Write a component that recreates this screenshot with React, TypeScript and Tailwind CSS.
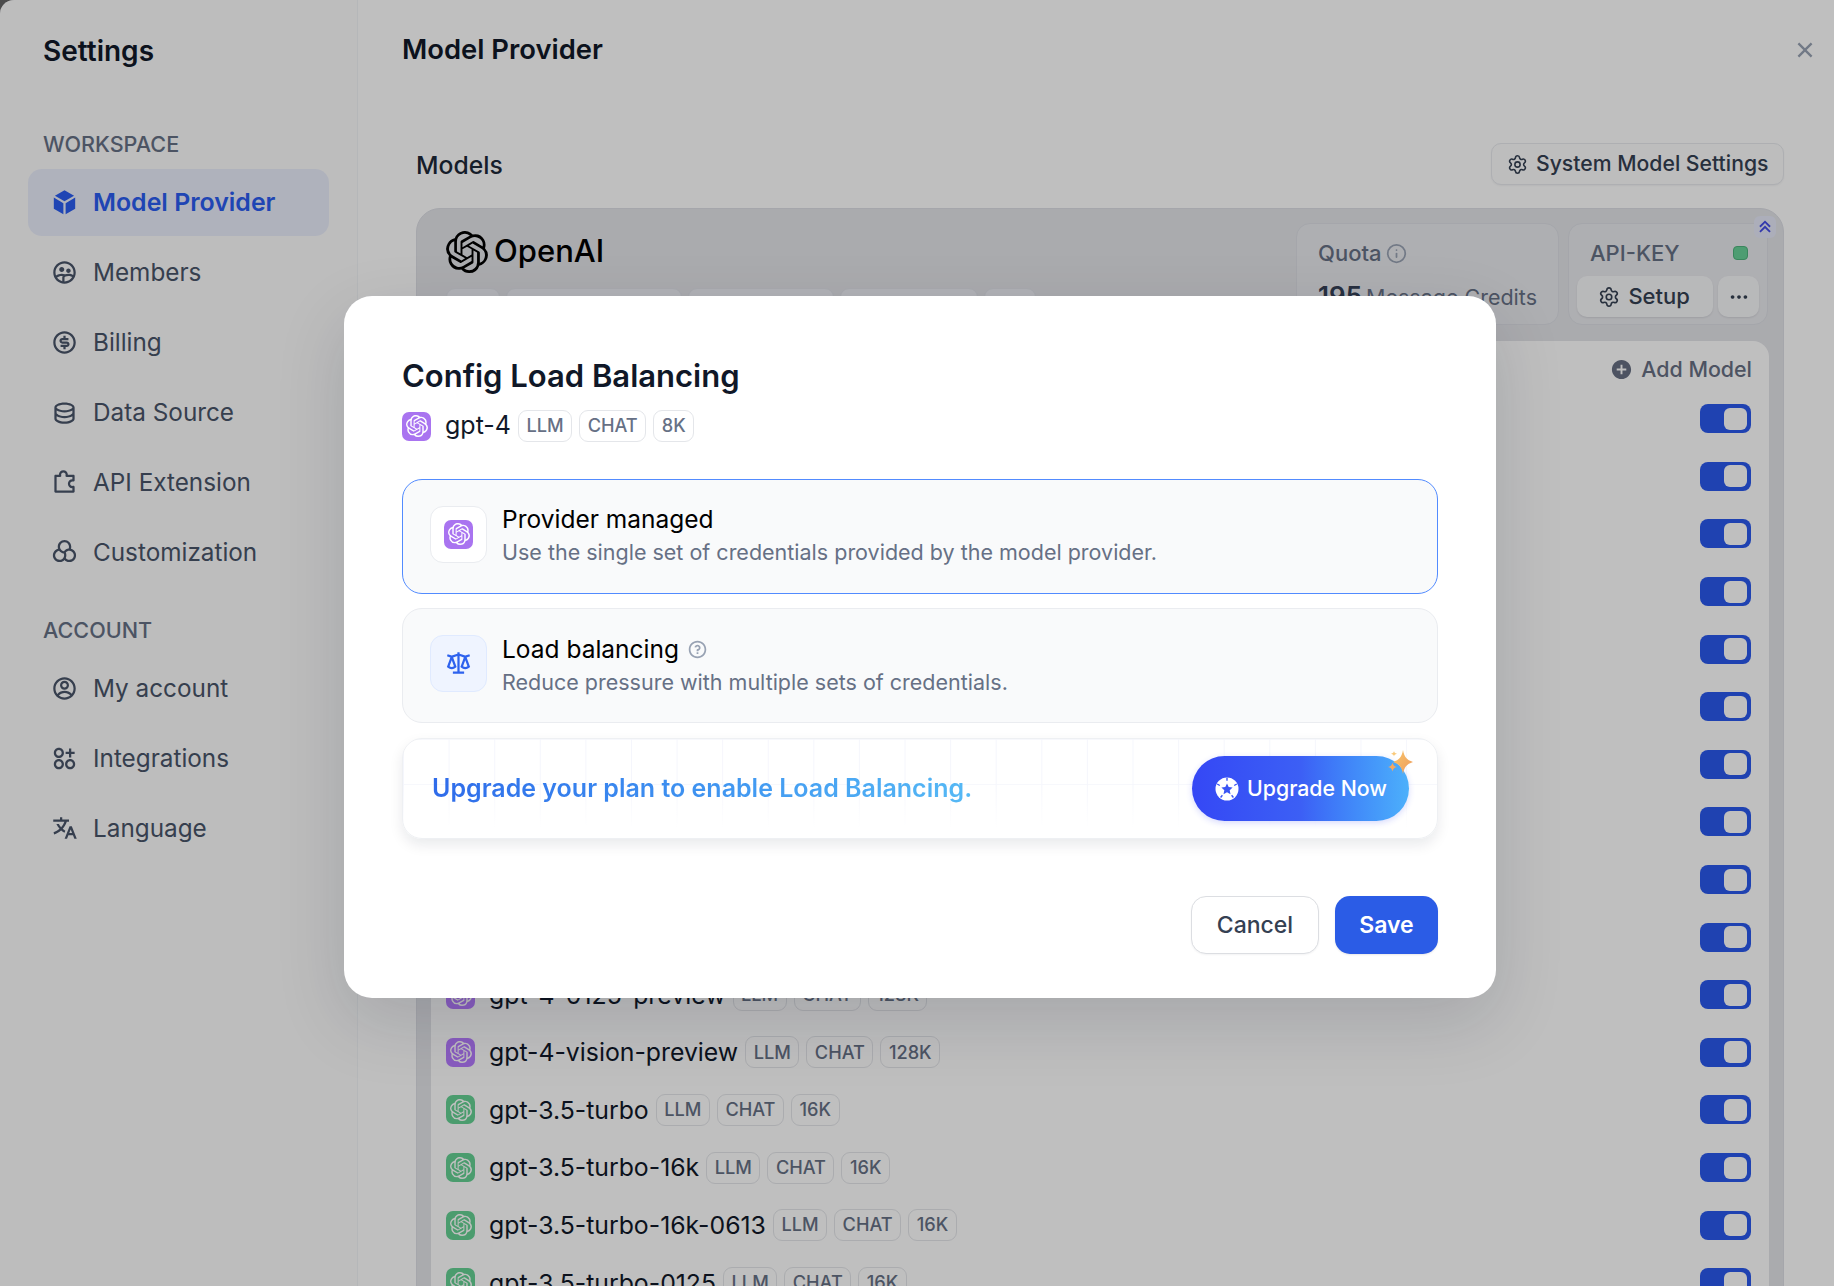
import { Info, Settings } from "lucide-react";
import {
  RiAccountCircleLine,
  RiAddCircleFill,
  RiApps2AddLine,
  RiArrowUpDoubleLine,
  RiBox3Fill,
  RiCloseLine,
  RiColorFilterLine,
  RiDatabase2Line,
  RiGroup2Line,
  RiMoneyDollarCircleLine,
  RiMoreFill,
  RiPuzzle2Line,
  RiQuestionLine,
  RiScales3Line,
  RiTranslate2,
} from "react-icons/ri";
import { SiOpenai } from "react-icons/si";

const workspaceItems = [
  { label: "Model Provider", icon: RiBox3Fill, active: true },
  { label: "Members", icon: RiGroup2Line },
  { label: "Billing", icon: RiMoneyDollarCircleLine },
  { label: "Data Source", icon: RiDatabase2Line },
  { label: "API Extension", icon: RiPuzzle2Line },
  { label: "Customization", icon: RiColorFilterLine },
];

const accountItems = [
  { label: "My account", icon: RiAccountCircleLine },
  { label: "Integrations", icon: RiApps2AddLine },
  { label: "Language", icon: RiTranslate2 },
];

const models = [
  { name: "gpt-4o", size: "128K", color: "bg-[#b67bff]" },
  { name: "gpt-4o-2024-05-13", size: "128K", color: "bg-[#b67bff]" },
  { name: "gpt-4o-mini", size: "128K", color: "bg-[#b67bff]" },
  { name: "gpt-4", size: "8K", color: "bg-[#b67bff]" },
  { name: "gpt-4-turbo", size: "128K", color: "bg-[#b67bff]" },
  { name: "gpt-4-turbo-2024-04-09", size: "128K", color: "bg-[#b67bff]" },
  { name: "gpt-4-turbo-preview", size: "128K", color: "bg-[#b67bff]" },
  { name: "gpt-4-32k", size: "32K", color: "bg-[#b67bff]" },
  { name: "gpt-4-1106-preview", size: "128K", color: "bg-[#b67bff]" },
  { name: "gpt-4-0613", size: "8K", color: "bg-[#b67bff]" },
  { name: "gpt-4-0125-preview", size: "128K", color: "bg-[#b67bff]" },
  { name: "gpt-4-vision-preview", size: "128K", color: "bg-[#b67bff]" },
  { name: "gpt-3.5-turbo", size: "16K", color: "bg-[#64d093]" },
  { name: "gpt-3.5-turbo-16k", size: "16K", color: "bg-[#64d093]" },
  { name: "gpt-3.5-turbo-16k-0613", size: "16K", color: "bg-[#64d093]" },
  { name: "gpt-3.5-turbo-0125", size: "16K", color: "bg-[#64d093]" },
];

function ModelIcon({ color }: { color: string }) {
  return (
    <span className={"flex h-[29px] w-[29px] shrink-0 items-center justify-center rounded-[7px] text-white " + color}>
      <SiOpenai className="h-[22px] w-[22px]" />
    </span>
  );
}

function Tag({ children }: { children: string }) {
  return (
    <span className="flex h-[32px] shrink-0 items-center rounded-[9px] border border-[#e4e6ea] px-[7.5px] text-[18.2px] font-medium text-[#667085]">
      {children}
    </span>
  );
}

function NavItem({ label, icon: Icon, active }: { label: string; icon: typeof RiBox3Fill; active?: boolean }) {
  return (
    <div
      className={
        "mx-[28px] flex h-[67px] items-center gap-[15px] rounded-[14px] pl-[23px] " +
        (active ? "bg-[#eaeefb] text-[24.9px] font-semibold text-[#2a5cf0]" : "text-[24.3px] font-normal text-[#495469]")
      }
    >
      <Icon className="h-[27px] w-[27px] shrink-0" />
      <span>{label}</span>
    </div>
  );
}

function Sidebar() {
  return (
    <aside className="flex h-full w-[358px] shrink-0 flex-col border-r border-[#f2f4f7] bg-[#fcfcfd]">
      <div className="flex h-[102px] items-center pl-[43px] text-[28px] font-semibold text-[#101828]">Settings</div>
      <div className="flex h-[67px] items-center pl-[43px] pt-[17px] text-[21.6px] font-medium text-[#667085]">WORKSPACE</div>
      <nav className="flex flex-col gap-[3px]">
        {workspaceItems.map((item) => (
          <NavItem key={item.label} {...item} />
        ))}
      </nav>
      <div className="flex h-[69px] items-center pl-[43px] pt-[20px] text-[21.6px] font-medium text-[#667085]">ACCOUNT</div>
      <nav className="flex flex-col gap-[3px]">
        {accountItems.map((item) => (
          <NavItem key={item.label} {...item} />
        ))}
      </nav>
    </aside>
  );
}

function ProviderTags() {
  return (
    <div className="mt-[15px] flex gap-[6px]">
      {["LLM", "TEXT EMBEDDING", "SPEECH2TEXT", "MODERATION", "TTS"].map((t) => (
        <span key={t} className="flex h-[36px] items-center rounded-[9px] border border-[#e0e2e8] bg-[#eceef3] px-[7.5px] text-[18px] font-medium text-[#667085]">
          {t}
        </span>
      ))}
    </div>
  );
}

function ModelRow({ name, size, color }: { name: string; size: string; color: string }) {
  return (
    <div className="flex h-[57.6px] items-center pl-[15px] pr-[18px]">
      <ModelIcon color={color} />
      <span className="ml-[14px] mr-[7px] pt-[1px] text-[24.8px] text-[#101828]">{name}</span>
      <div className="flex gap-[7px]">
        <Tag>LLM</Tag>
        <Tag>CHAT</Tag>
        <Tag>{size}</Tag>
      </div>
      <span className="ml-auto flex h-[29px] w-[51px] items-center justify-end rounded-[8px] bg-[#2a58ed] pr-[4px]">
        <span className="h-[22px] w-[23px] rounded-[6px] bg-white" />
      </span>
    </div>
  );
}

function Main() {
  return (
    <main className="relative h-full min-w-0 flex-1 overflow-hidden bg-white">
      <div className="flex h-[100px] items-center justify-between pl-[44px] pr-[15px]">
        <span className="text-[27.4px] font-semibold text-[#101828]">Model Provider</span>
        <RiCloseLine className="h-[28px] w-[28px] text-[#98a2b3]" />
      </div>
      <div className="pl-[58px] pr-[50px] pt-[43px]">
        <div className="flex h-[42px] items-center justify-between">
          <span className="pt-[3px] text-[24.7px] font-medium text-[#1d2939]">Models</span>
          <button className="flex h-[42px] w-[293px] items-center gap-[8px] whitespace-nowrap rounded-[10px] border border-[#e8eaee] bg-[#fcfcfd] pl-[15px] text-[21.2px] font-medium text-[#354052] shadow-[0_1px_2px_rgba(16,24,40,0.05)]">
            <Settings className="h-[21px] w-[21px]" strokeWidth={1.8} />
            System Model Settings
          </button>
        </div>
        <section className="relative mt-[23px] rounded-[24px] border border-[#dcdee4] bg-[#e3e4e9]">
          <div className="flex justify-between pl-[29px] pr-[15px] pt-[14px]">
            <div className="pt-[7px]">
              <div className="flex h-[43px] items-center gap-[6px] text-black">
                <SiOpenai className="h-[42px] w-[42px]" />
                <span className="text-[31px] font-medium">OpenAI</span>
              </div>
              <ProviderTags />
            </div>
            <div className="flex gap-[9px]">
              <div className="h-[102px] w-[263px] rounded-[14px] border border-[#dcdee4] bg-[#e9eaee] pl-[21px] pt-[14px] text-[#667085]">
                <div className="flex h-[30px] items-center gap-[4px] text-[22px] font-medium">
                  Quota
                  <Info className="h-[21px] w-[21px] text-[#98a2b3]" />
                </div>
                <div className="mt-[8px] flex items-baseline gap-[4px] text-[21.5px]">
                  <span className="text-[26px] font-semibold text-[#344054]">195</span>
                  Message Credits
                </div>
              </div>
              <div className="h-[102px] w-[200px] rounded-[14px] border border-[#dcdee4] bg-[#e9eaee] px-[8px]">
                <div className="flex h-[52px] items-center justify-between pl-[13px] pr-[11px] pt-[6px] text-[22px] font-medium text-[#667085]">
                  API-KEY
                  <span className="h-[14px] w-[15px] rounded-[4px] border border-[#4fb37c] bg-[#69d298]" />
                </div>
                <div className="flex gap-[5px]">
                  <button className="flex h-[41px] w-[137px] items-center justify-center gap-[8px] rounded-[10px] bg-[#f6f7f9] pr-[2px] text-[22px] font-medium text-[#354052] shadow-[0_1px_2px_rgba(16,24,40,0.1)]">
                    <Settings className="h-[22px] w-[22px]" strokeWidth={1.8} />
                    Setup
                  </button>
                  <button className="flex h-[41px] w-[41px] items-center justify-center rounded-[10px] bg-[#f6f7f9] text-[#354052] shadow-[0_1px_2px_rgba(16,24,40,0.1)]">
                    <RiMoreFill className="h-[22px] w-[22px]" />
                  </button>
                </div>
              </div>
            </div>
          </div>
          <span className="absolute right-[7px] top-[7px] flex h-[22px] w-[22px] items-center justify-center rounded-[6px] bg-[#e6e9f8] text-[#444ce7]">
            <RiArrowUpDoubleLine className="h-[22px] w-[22px]" />
          </span>
          <div className="mx-[14px] mt-[16px] rounded-t-[16px] bg-white">
            <div className="flex h-[49px] items-center justify-end pr-[17px] pt-[8px] text-[#676f83]">
              <RiAddCircleFill className="mr-[8px] h-[23px] w-[23px]" />
              <span className="text-[21.4px] font-medium">Add Model</span>
            </div>
            {models.map((m) => (
              <ModelRow key={m.name} {...m} />
            ))}
          </div>
        </section>
      </div>
    </main>
  );
}

function UpgradeIcon() {
  return (
    <svg viewBox="0 0 24 24" className="h-[24px] w-[24px] shrink-0">
      <circle cx="12" cy="12" r="11.5" fill="#fff" />
      <path d="M12 6.5l1.7 3.6 3.900.5-2.900 2.700.8 3.900-3.500-2-3.500 2 .8-3.900-2.900-2.700 3.900-.5z" fill="#3a55f4" />
      <path d="M12 .8v3M2.200 7l2.600 1.500M21.800 7l-2.600 1.500M5.600 20.500l1.800-2.200M18.400 20.500l-1.800-2.200" stroke="#3a55f4" strokeWidth="1.4" />
    </svg>
  );
}

function Sparkles() {
  return (
    <svg viewBox="0 0 25 24" className="absolute right-[-4px] top-[-6px] h-[24px] w-[25px]">
      <defs>
        <linearGradient id="spark" x1="0" y1="0" x2="1" y2="1">
          <stop offset="0" stopColor="#f8c66a" />
          <stop offset="1" stopColor="#ee9a5c" />
        </linearGradient>
      </defs>
      <path d="M15 0c1.300 7 3.500 9.700 10 12-6.500 2.300-8.700 5-10 12-1.300-7-3.500-9.700-10-12 6.500-2.300 8.700-5 10-12z" fill="url(#spark)" />
      <path d="M4.500 12.500c.6 2.700 1.600 3.800 4.500 4.500-2.900.7-3.900 1.800-4.500 4.500C3.900 18.800 2.900 17.700 0 17c2.900-.7 3.900-1.800 4.500-4.500z" fill="#f5a862" />
      <path d="M6 1c.3 1.500.9 2.100 3 2.700C6.900 4.300 6.300 4.900 6 6.400c-.3-1.500-.9-2.100-3-2.700C5.100 3.100 5.700 2.500 6 1z" fill="#f9c878" />
    </svg>
  );
}

function OptionCard({
  title,
  desc,
  selected,
  help,
  icon,
}: {
  title: string;
  desc: string;
  selected?: boolean;
  help?: boolean;
  icon: React.ReactNode;
}) {
  return (
    <div
      className={
        "flex h-[115px] items-center gap-[15px] rounded-[20px] border bg-[#f9fafb] pl-[27px] " +
        (selected ? "border-[#528bff]" : "border-[#eaecf0]")
      }
    >
      <div
        className={
          "mb-[5px] flex h-[57px] w-[57px] shrink-0 items-center justify-center rounded-[13px] border " +
          (selected ? "border-[#eaecf0] bg-white" : "border-[#e0eaff] bg-[#eff4ff]")
        }
      >
        {icon}
      </div>
      <div className={selected ? "pb-[2px]" : ""}>
        <div className="flex h-[32px] items-center gap-[8px] text-[24.5px] text-black">
          {title}
          {help && <RiQuestionLine className="h-[21px] w-[21px] text-[#98a2b3]" />}
        </div>
        <div className="h-[32px] text-[21.5px] leading-[32px] text-[#667085]">{desc}</div>
      </div>
    </div>
  );
}

function ConfigModal() {
  return (
    <div className="absolute left-[344px] top-[296px] h-[702px] w-[1152px] rounded-[28px] bg-white px-[58px] pt-[60px] shadow-[0_24px_70px_rgba(16,24,40,0.14)]">
      <h2 className="h-[40px] text-[31px] font-semibold leading-[40px] text-[#101828]">Config Load Balancing</h2>
      <div className="mt-[14px] flex h-[32px] items-center">
        <ModelIcon color="bg-[#a974f0]" />
        <span className="ml-[14px] mr-[7px] text-[25px] text-[#101828]">gpt-4</span>
        <div className="flex gap-[7px]">
          <Tag>LLM</Tag>
          <Tag>CHAT</Tag>
          <Tag>8K</Tag>
        </div>
      </div>
      <div className="mt-[37px] flex flex-col gap-[14px]">
        <OptionCard
          selected
          title="Provider managed"
          desc="Use the single set of credentials provided by the model provider."
          icon={<ModelIcon color="bg-[#a974f0]" />}
        />
        <OptionCard
          help
          title="Load balancing"
          desc="Reduce pressure with multiple sets of credentials."
          icon={<RiScales3Line className="h-[27px] w-[27px] text-[#2e62ee]" />}
        />
      </div>
      <div className="mt-[15px] flex h-[101px] items-center justify-between rounded-[20px] border border-[#eef0f3] bg-[linear-gradient(to_bottom,rgba(255,255,255,0)_45%,#ffffff_90%),linear-gradient(to_right,#f5f6fc_1px,transparent_1px),linear-gradient(to_bottom,#f7f8fc_1px,transparent_1px)] bg-[size:100%_100%,45.6px_45px,45.6px_45px] pl-[29px] pr-[28px] shadow-[0_6px_14px_rgba(16,24,40,0.09)]">
        <span className="bg-gradient-to-r from-[#2f6bea] to-[#56b9f5] bg-clip-text text-[25px] font-semibold text-transparent">
          Upgrade your plan to enable Load Balancing.
        </span>
        <button className="relative flex h-[65px] w-[217px] items-center gap-[8px] whitespace-nowrap rounded-full bg-gradient-to-r from-[#3547f5] via-[#3c5ff5] to-[#4db0fb] pl-[23px] text-[21.3px] font-medium text-white shadow-[0_2px_6px_rgba(53,71,245,0.2)]">
          <UpgradeIcon />
          Upgrade Now
          <Sparkles />
        </button>
      </div>
      <div className="mt-[57px] flex justify-end gap-[16px]">
        <button className="h-[58px] w-[128px] rounded-[15px] border border-[#dcdee2] bg-white pt-[1px] text-[23px] font-medium text-[#354052] shadow-[0_1px_2px_rgba(16,24,40,0.05)]">
          Cancel
        </button>
        <button className="h-[58px] w-[103px] rounded-[15px] bg-[#2b5ce6] pt-[1px] text-[23px] font-semibold text-white shadow-[0_1px_2px_rgba(16,24,40,0.1)]">
          Save
        </button>
      </div>
    </div>
  );
}

export default function App() {
  return (
    <div className="relative h-screen w-full overflow-hidden bg-[#4b4b4b] font-['Inter',sans-serif]">
      <div className="flex h-full overflow-hidden rounded-tl-[14px]">
        <Sidebar />
        <Main />
      </div>
      {/* dim layer + dialog */}
      <div className="absolute inset-0 rounded-tl-[14px] bg-black/25" />
      <ConfigModal />
    </div>
  );
}
